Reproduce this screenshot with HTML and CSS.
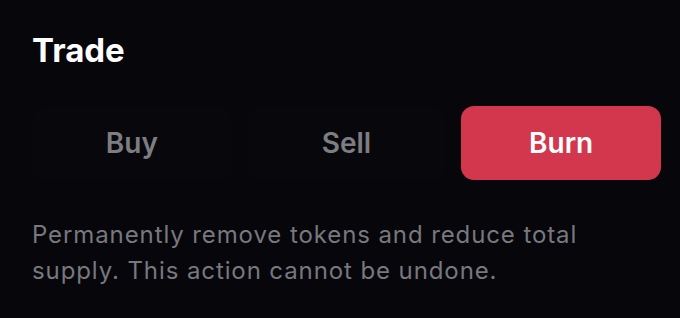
FILE: index.html
```html
<!DOCTYPE html>
<html lang="en">
<head>
  <meta charset="UTF-8" />
  <meta name="viewport" content="width=device-width, initial-scale=1.0" />
  <title>Trade</title>
  <link rel="stylesheet" href="styles.css">
</head>
<body>
  <div class="panel">
    <h2 class="title">Trade</h2>
    <div class="tabs">
      <button class="tab">Buy</button>
      <button class="tab">Sell</button>
      <button class="tab active">Burn</button>
    </div>
    <p class="hint">Permanently remove tokens and reduce total supply. This action cannot be undone.</p>
  </div>
</body>
</html>
```

FILE: styles.css
```css
body {
  margin: 0;
  background-color: #06060b;
  font-family: Inter, "Noto Sans", sans-serif;
  color: #ffffff;
}
.panel {
  width: 629px;
  padding: 30px 32px 0 32px;
}
.title {
  margin: 0;
  font-size: 33px;
  font-weight: 700;
  line-height: 40px;
}
.tabs {
  display: grid;
  grid-template-columns: repeat(3, 1fr);
  gap: 15px;
  margin-top: 36px;
}
.tab {
  height: 74px;
  border: none;
  border-radius: 13px;
  background-color: #08080c;
  color: #7d7d82;
  font-family: inherit;
  font-size: 28px;
  font-weight: 600;
}
.tab.active {
  background-color: #d2374d;
  color: #ffffff;
}
.hint {
  margin: 37px 0 0 0;
  font-size: 24px;
  line-height: 36px;
  letter-spacing: 0.9px;
  color: #78787d;
}
```
